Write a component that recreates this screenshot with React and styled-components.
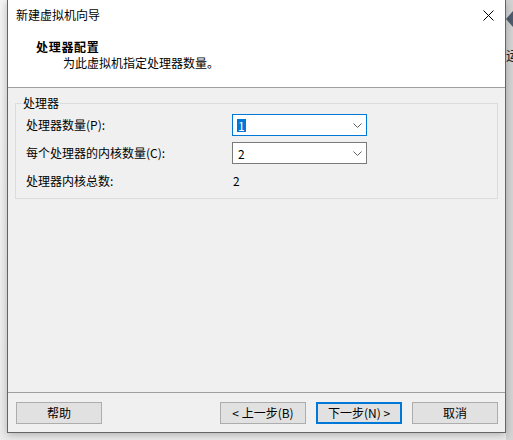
import React from "react";
import styled, { createGlobalStyle } from "styled-components";

const GlobalStyle = createGlobalStyle`
  html, body {
    margin: 0;
    padding: 0;
    background: #f2f2f2;
    font-family: "Noto Sans CJK SC", "Noto Sans", sans-serif;
    font-size: 12px;
    color: #000;
  }
`;

const Screen = styled.div`
  display: flex;
  width: 513px;
  height: 440px;
  overflow: hidden;
  background: linear-gradient(#f4f4f4, #ececec);
`;

const Gutter = styled.div`
  width: 7px;
  flex: none;
`;

const BehindStrip = styled.div`
  width: 8px;
  flex: none;
  height: 100%;
  background: #d4d4d4;
  display: flex;
  flex-direction: column;
  overflow: hidden;
`;

const BehindArrow = styled.div`
  margin-top: 11px;
  width: 0;
  height: 0;
  border-top: 8px solid transparent;
  border-bottom: 8px solid transparent;
  border-right: 7px solid #4d5c6b;
`;

const BehindText = styled.div`
  margin-top: 20px;
  font-size: 13px;
  line-height: 16px;
  color: #222;
  white-space: nowrap;
`;

const Window = styled.div`
  width: 499px;
  height: 433px;
  flex: none;
  box-sizing: border-box;
  border: 1px solid #646464;
  border-top: none;
  background: #f0f0f0;
  display: flex;
  flex-direction: column;
  box-shadow: 0 2px 8px rgba(0, 0, 0, 0.25);
  position: relative;
  z-index: 1;
`;

const TitleBar = styled.div`
  height: 30px;
  flex: none;
  background: #fff;
  display: flex;
  align-items: center;
  justify-content: space-between;
  padding: 0 0 0 8px;
`;

const TitleText = styled.span`
  font-size: 12px;
  line-height: 16px;
`;

const CloseButton = styled.div`
  width: 46px;
  height: 30px;
  display: flex;
  align-items: center;
  justify-content: center;
  margin-right: -6px;
`;

const Header = styled.div`
  height: 58px;
  flex: none;
  box-sizing: border-box;
  background: #fff;
  border-bottom: 1px solid #a0a0a0;
  padding: 9px 0 0 28px;
`;

const HeaderTitle = styled.div`
  font-weight: 700;
  font-size: 12px;
  line-height: 16px;
  letter-spacing: 0.7px;
`;

const HeaderSub = styled.div`
  font-size: 12px;
  line-height: 16px;
  padding-left: 27px;
`;

const Body = styled.div`
  flex: 1;
  padding: 7px 7px 0 7px;
`;

const Group = styled.fieldset`
  margin: 0;
  border: 1px solid #dcdcdc;
  padding: 3px 10px 6px 10px;
  display: flex;
  flex-direction: column;
  gap: 6px;
`;

const Legend = styled.legend`
  padding: 0 1px;
  margin-left: -4px;
  font-size: 12px;
  line-height: 16px;
`;

const Row = styled.div`
  display: flex;
  align-items: center;
  height: 22px;
`;

const Label = styled.span`
  width: 206px;
  flex: none;
  line-height: 16px;
`;

const Value = styled.span`
  padding-left: 1px;
  line-height: 16px;
`;

const Combo = styled.div`
  width: 135px;
  height: 22px;
  box-sizing: border-box;
  border: 1px solid ${(p) => (p.$focused ? "#0078d7" : "#7a7a7a")};
  background: #fff;
  display: flex;
  align-items: center;
  justify-content: space-between;
  padding: 0 4px 0 4px;
`;

const ComboText = styled.span`
  line-height: 13px;
  padding: 0 1px;
  background: ${(p) => (p.$selected ? "#0078d7" : "transparent")};
  color: ${(p) => (p.$selected ? "#fff" : "#000")};
`;

const Footer = styled.div`
  height: 40px;
  flex: none;
  border-top: 1px solid #a0a0a0;
  box-sizing: border-box;
  display: flex;
  align-items: flex-start;
  padding: 9px 7px 0 8px;
  gap: 10px;
`;

const Button = styled.button`
  width: 86px;
  height: 22px;
  box-sizing: border-box;
  background: #e1e1e1;
  border: ${(p) => (p.$default ? "2px solid #0078d7" : "1px solid #adadad")};
  font-family: inherit;
  font-size: 12px;
  line-height: 16px;
  color: #000;
  padding: 0;
  margin: 0;
  margin-left: ${(p) => (p.$push ? "auto" : "0")};
`;

const Chevron = () => (
  <svg width="9" height="5" viewBox="0 0 9 5">
    <polyline points="0.5,0.5 4.5,4.5 8.5,0.5" fill="none" stroke="#606060" strokeWidth="1" />
  </svg>
);

const CloseIcon = () => (
  <svg width="11" height="11" viewBox="0 0 11 11">
    <path d="M0.5 0.5 L10.5 10.5 M10.5 0.5 L0.5 10.5" stroke="#000" strokeWidth="1" fill="none" />
  </svg>
);

export default function App() {
  return (
    <>
      <GlobalStyle />
      <Screen>
        <Gutter />
        <Window>
          <TitleBar>
            <TitleText>新建虚拟机向导</TitleText>
            <CloseButton>
              <CloseIcon />
            </CloseButton>
          </TitleBar>
          <Header>
            <HeaderTitle>处理器配置</HeaderTitle>
            <HeaderSub>为此虚拟机指定处理器数量。</HeaderSub>
          </Header>
          <Body>
            <Group>
              <Legend>处理器</Legend>
              <Row>
                <Label>处理器数量(P):</Label>
                <Combo $focused>
                  <ComboText $selected>1</ComboText>
                  <Chevron />
                </Combo>
              </Row>
              <Row>
                <Label>每个处理器的内核数量(C):</Label>
                <Combo>
                  <ComboText>2</ComboText>
                  <Chevron />
                </Combo>
              </Row>
              <Row>
                <Label>处理器内核总数:</Label>
                <Value>2</Value>
              </Row>
            </Group>
          </Body>
          <Footer>
            <Button>帮助</Button>
            <Button $push>&lt; 上一步(B)</Button>
            <Button $default>下一步(N) &gt;</Button>
            <Button>取消</Button>
          </Footer>
        </Window>
        <BehindStrip>
          <BehindArrow />
          <BehindText>运</BehindText>
        </BehindStrip>
      </Screen>
    </>
  );
}
